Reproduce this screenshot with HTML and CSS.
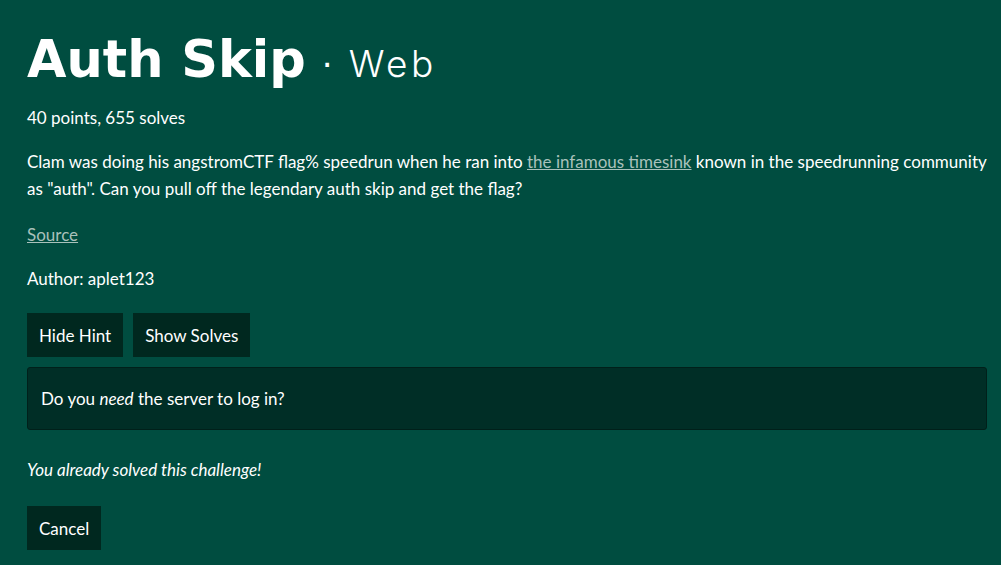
FILE: index.html
```html
<!DOCTYPE html>
<html>
<head>
<meta charset="utf-8">
<link rel="stylesheet" href="styles.css">
</head>
<body>
<main class="page">
  <h1 class="title"><span class="name">Auth Skip</span><span class="dot">·</span><span class="cat">Web</span></h1>
  <p class="meta">40 points, 655 solves</p>
  <p class="desc">Clam was doing his angstromCTF flag% speedrun when he ran into <a href="#">the infamous timesink</a> known in the speedrunning community as "auth". Can you pull off the legendary auth skip and get the flag?</p>
  <p class="meta"><a href="#">Source</a></p>
  <p class="meta author">Author: aplet123</p>
  <div class="actions">
    <button class="btn">Hide Hint</button>
    <button class="btn">Show Solves</button>
  </div>
  <div class="hint"><span>Do you <em>need</em> the server to log in?</span></div>
  <p class="solved"><em>You already solved this challenge!</em></p>
  <button class="btn">Cancel</button>
</main>
</body>
</html>
```
FILE: styles.css
```css
html, body {
  margin: 0;
  padding: 0;
  background: #004d40;
  color: #fff;
  font-family: Lato, "Open Sans", sans-serif;
  font-size: 17px;
}
.page {
  padding: 34px 14px 20px 27px;
}
.title {
  margin: 0;
  display: flex;
  align-items: baseline;
  font-weight: normal;
  line-height: 1;
  height: 70px;
}
.name {
  font-family: "DejaVu Sans", sans-serif;
  font-weight: 700;
  font-size: 51px;
}
.dot {
  font-family: "DejaVu Sans", sans-serif;
  font-weight: 400;
  font-size: 34px;
  margin: 0 16px 0 16px;
}
.cat {
  font-family: Inter, sans-serif;
  font-weight: 300;
  font-size: 37px;
  letter-spacing: 3.5px;
}
p { margin: 0; }
.meta {
  line-height: 27px;
  margin-bottom: 17px;
}
.author {
  margin-bottom: 21px;
}
.desc {
  line-height: 27px;
  margin-bottom: 19px;
}
a {
  color: #a9c1bb;
  text-decoration: underline;
}
.actions {
  display: flex;
  gap: 10px;
  margin-top: 1px;
  margin-bottom: 10px;
}
.btn {
  font: inherit;
  color: #fff;
  background: #00281f;
  border: none;
  border-radius: 0;
  height: 44px;
  padding: 0 12px;
  cursor: pointer;
}
.hint {
  background: #002e26;
  border: 1px solid #00201a;
  border-radius: 3px;
  height: 61px;
  padding: 0 13px;
  display: flex;
  align-items: center;
  margin-bottom: 26px;
}
.solved {
  line-height: 27px;
  margin-bottom: 23px;
}
```
